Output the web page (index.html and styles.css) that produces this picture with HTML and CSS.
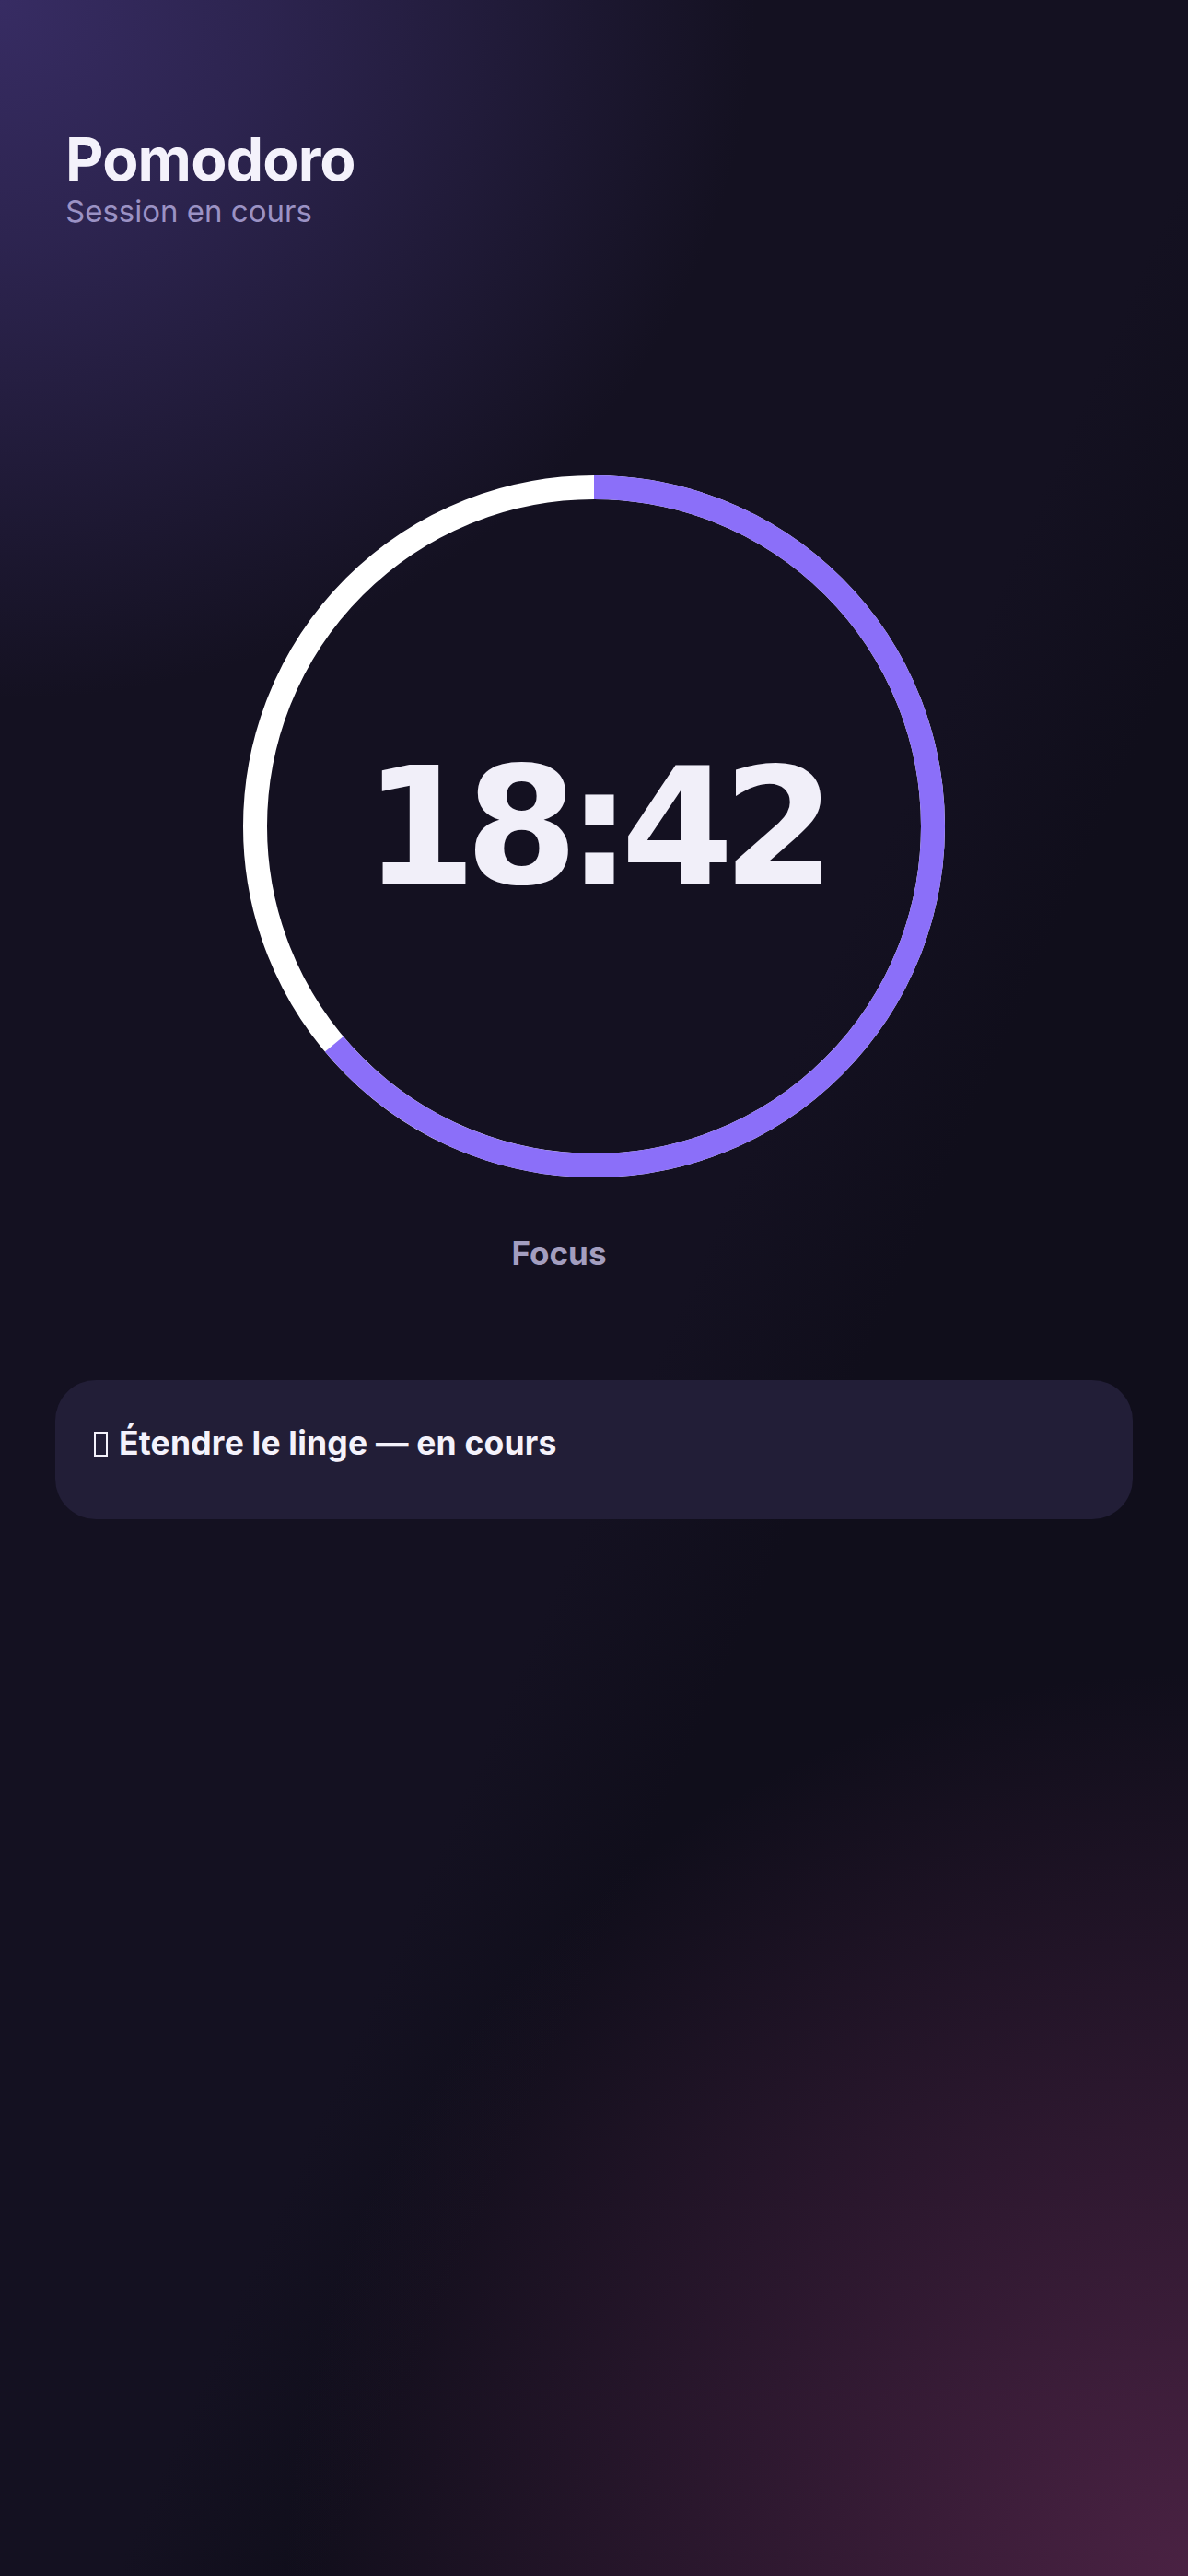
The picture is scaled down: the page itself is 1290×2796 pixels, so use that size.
FILE: index.html
```html
<!DOCTYPE html>
<html lang="fr">
<head>
  <meta charset="UTF-8">
  <meta name="viewport" content="width=device-width, initial-scale=1.0">
  <title>Pomodoro</title>
  <link rel="stylesheet" href="styles.css">
</head>
<body>

    <div class="screen">
        <header class="header">
          <h1>Pomodoro</h1>
          <p class="subtitle">Session en cours</p>
        </header>

        <div class="timer">
          <svg class="ring" viewBox="0 0 762 762" width="762" height="762">
            <circle class="track" cx="381" cy="381" r="368"></circle>
            <circle class="progress" cx="381" cy="381" r="368" stroke-dasharray="1477 2313" transform="rotate(-90 381 381)"></circle>
          </svg>
          <span class="time">18:42</span>
        </div>

        <div class="phase">Focus</div>

        <div class="task">
          <span class="glyph-box"></span>
          <span class="task-text">Étendre le linge — en cours</span>
        </div>
    </div>

</body>
</html>
```

FILE: styles.css
```css
body {
  margin: 0;
  min-height: 2796px;
  font-family: Inter, "Noto Sans", sans-serif;
  color: #f4f2fb;
  background-color: #120f1e;
  background-image:
    radial-gradient(ellipse 820px 760px at 0 0, #372c63 0%, rgba(55, 44, 99, 0.7) 35%, rgba(55, 44, 99, 0) 100%),
    radial-gradient(circle 980px at 100% 100%, #4a2243 0%, rgba(74, 34, 67, 0.6) 40%, rgba(74, 34, 67, 0) 100%),
    linear-gradient(114deg, #141121 0%, #141121 54%, #100e1b 63%, #100e1b 100%);
}

.screen {
  display: flex;
  flex-direction: column;
}

.header {
  padding: 136px 71px 0;
}

h1 {
  margin: 0;
  font-size: 64px;
  line-height: 1.15;
  font-weight: 700;
  letter-spacing: -0.8px;
}

.subtitle {
  margin: 0;
  font-size: 33px;
  line-height: 1.2;
  color: #9b92c4;
}

/* Ring + time, stacked in one grid cell */
.timer {
  display: grid;
  place-items: center;
  justify-content: center;
  margin-top: 267px;
}

.ring,
.time {
  grid-area: 1 / 1;
}

.track {
  fill: none;
  stroke: #ffffff;
  stroke-width: 26;
}

.progress {
  fill: none;
  stroke: #8b6ff9;
  stroke-width: 26;
}

.time {
  font-family: "DejaVu Sans", sans-serif;
  font-weight: 700;
  font-size: 176px;
  line-height: 1;
  letter-spacing: -12px;
  padding-top: 4px;
  color: #f1eff9;
}

.phase {
  margin-top: 61px;
  padding-right: 76px;
  text-align: center;
  font-size: 35px;
  line-height: 1.2;
  font-weight: 700;
  color: #a39ebf;
}

.task {
  display: flex;
  align-items: center;
  gap: 12px;
  margin: 117px 60px 0;
  padding: 43px 42px 57px;
  background-color: #221e37;
  border-radius: 44px;
}

/* missing-glyph box in front of the task */
.glyph-box {
  width: 11px;
  height: 23px;
  border: 2px solid #f4f2fb;
  margin-top: 2px;
}

.task-text {
  font-size: 35.5px;
  line-height: 51px;
  font-weight: 700;
  letter-spacing: 0.2px;
  color: #f4f2fb;
}
```
